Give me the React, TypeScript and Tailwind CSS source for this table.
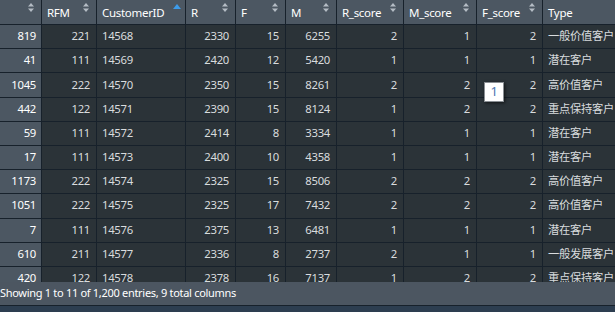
import React from 'react';

type Row = [string, string, string, string, string, string, string, string, string, string];

const COLUMNS = ['', 'RFM', 'CustomerID', 'R', 'F', 'M', 'R_score', 'M_score', 'F_score', 'Type'];

const ROWS: Row[] = [
  ['819', '221', '14568', '2330', '15', '6255', '2', '1', '2', '一般价值客户'],
  ['41', '111', '14569', '2420', '12', '5420', '1', '1', '1', '潜在客户'],
  ['1045', '222', '14570', '2350', '15', '8261', '2', '2', '2', '高价值客户'],
  ['442', '122', '14571', '2390', '15', '8124', '1', '2', '2', '重点保持客户'],
  ['59', '111', '14572', '2414', '8', '3334', '1', '1', '1', '潜在客户'],
  ['17', '111', '14573', '2400', '10', '4358', '1', '1', '1', '潜在客户'],
  ['1173', '222', '14574', '2325', '15', '8506', '2', '2', '2', '高价值客户'],
  ['1051', '222', '14575', '2325', '17', '7432', '2', '2', '2', '高价值客户'],
  ['7', '111', '14576', '2375', '13', '6481', '1', '1', '1', '潜在客户'],
  ['610', '211', '14577', '2336', '8', '2737', '2', '1', '1', '一般发展客户'],
  ['420', '122', '14578', '2378', '16', '7137', '1', '2', '2', '重点保持客户'],
];

// columns that are left aligned in the body
const LEFT = [2, 9];

function SortIcon({ active }: { active?: boolean }) {
  if (active) {
    return (
      <svg width="8" height="5" viewBox="0 0 8 5" className="absolute right-[4px] top-[4px]">
        <polygon points="0,5 4,0 8,5" fill="#3d9be9" />
      </svg>
    );
  }
  return (
    <svg width="6" height="9" viewBox="0 0 6 9" className="absolute right-[7px] top-[3px]">
      <polygon points="0,3.5 3,0 6,3.5" fill="#b4bcc4" />
      <polygon points="0,5.5 3,9 6,5.5" fill="#b4bcc4" />
    </svg>
  );
}

function App() {
  return (
    <div
      className="w-[615px] h-[312px] overflow-hidden flex flex-col bg-[#2b3338] text-[11.3px] tracking-[-0.3px]"
      style={{ fontFamily: '"Noto Sans", "Noto Sans CJK SC", sans-serif' }}
    >
      <div className="relative flex-1 overflow-hidden">
        <div className="grid grid-cols-[41px_54px_88px_49px_49px_50px_66px_72px_65px_100px] grid-rows-[24px] auto-rows-[23.2px] gap-px bg-[#17212b] w-[650px]">
          {COLUMNS.map((c, i) => (
            <div key={i} className="relative bg-[#4c5762] text-white flex items-center pl-[5px] pt-[2px] whitespace-nowrap text-[11.5px]">
              {c}
              <SortIcon active={i === 2} />
            </div>
          ))}
          {ROWS.map((row, r) =>
            row.map((v, i) => (
              <div
                key={`${r}-${i}`}
                className={`flex items-center whitespace-nowrap ${
                  i === 0 ? 'bg-[#4c5762] text-white justify-end pr-[5px]' : 'bg-[#2b3338] text-[#d9dcde]'
                } ${i > 0 && LEFT.includes(i) ? 'pl-[5px]' : ''} ${i > 0 && !LEFT.includes(i) ? 'justify-end pr-[6px]' : ''}`}
              >
                {v}
              </div>
            ))
          )}
        </div>
        <div className="absolute left-[484px] top-[82px] w-[20px] h-[20px] bg-white border border-[#8a8f94] shadow-[1px_1px_3px_rgba(0,0,0,0.6)] flex items-center justify-center text-[#4a74b0] text-[13px]">
          1
        </div>
      </div>
      <div className="h-[24px] shrink-0 bg-[#4c5661] border-b border-[#17212b] text-white flex items-center whitespace-nowrap text-[11px]">
        Showing 1 to 11 of 1,200 entries, 9 total columns
      </div>
      <div className="h-[6px] shrink-0 bg-[#2d3e50]" />
    </div>
  );
}

export default App;
